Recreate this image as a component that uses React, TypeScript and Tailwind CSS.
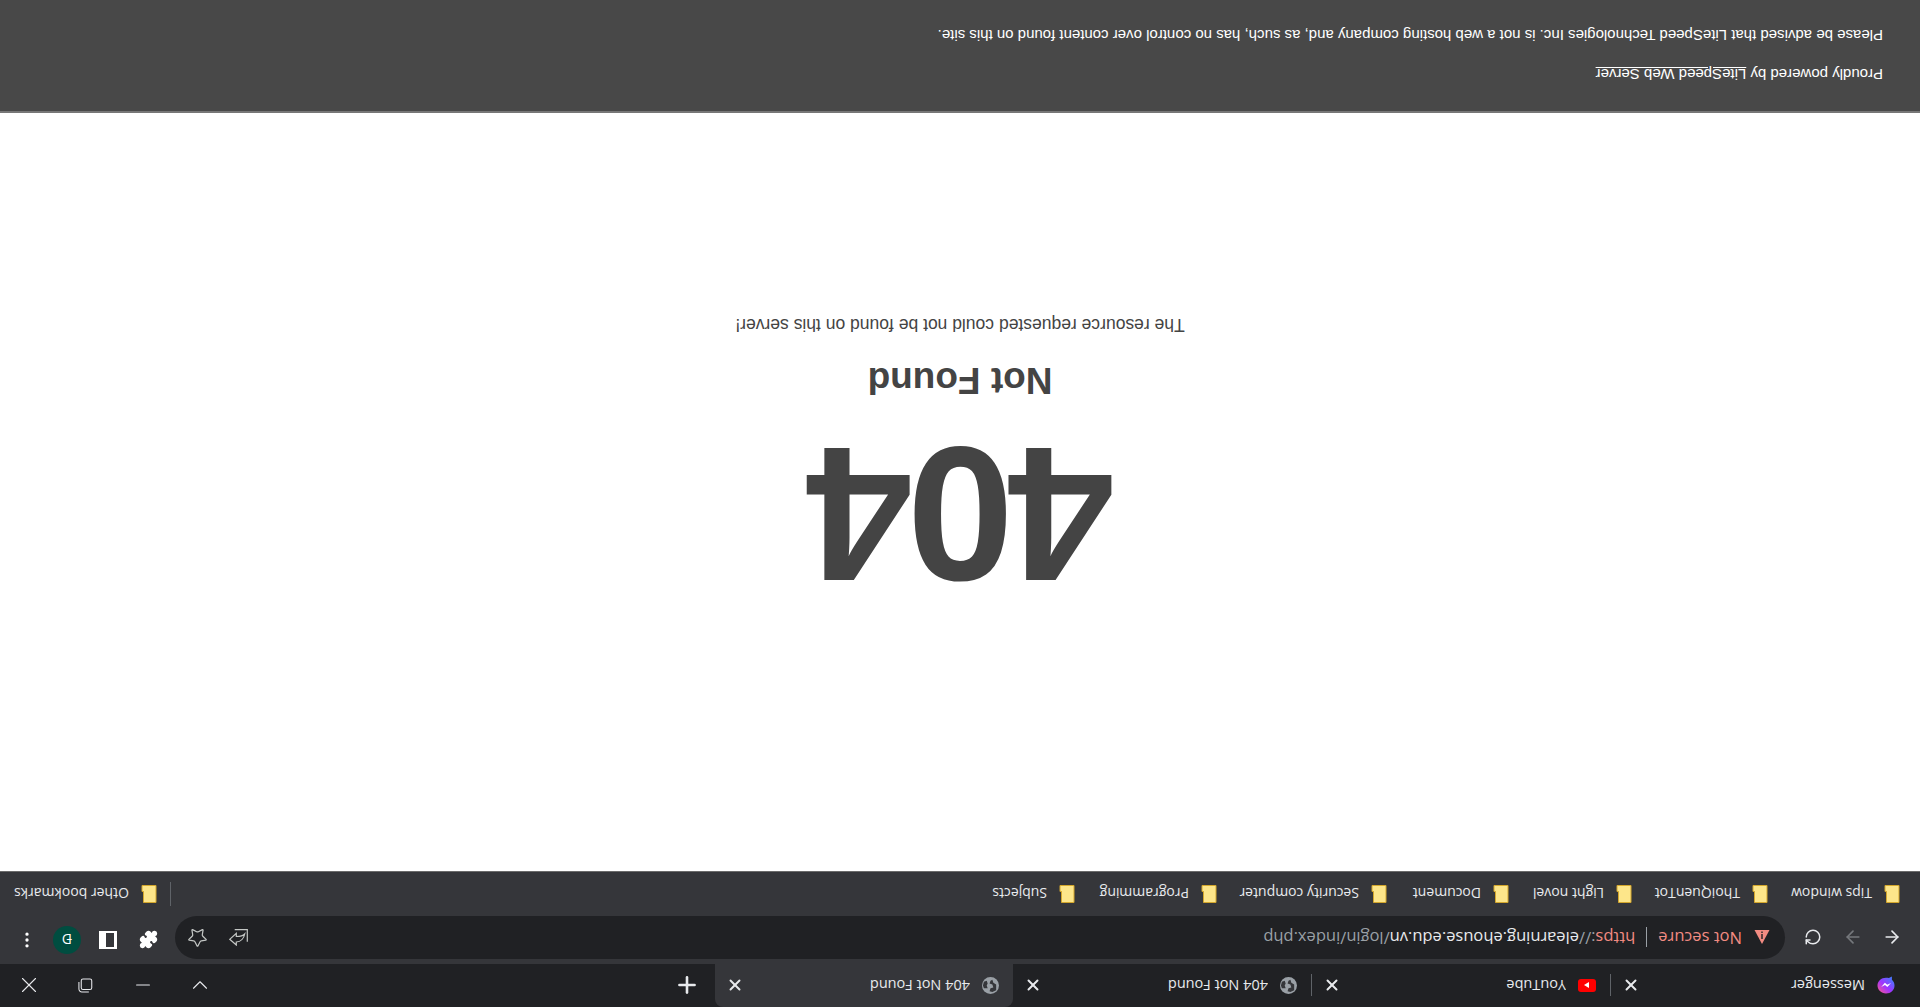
import { ArrowLeft, ArrowRight, RotateCw, Star, Puzzle, X, Plus, Minus, ChevronDown, EllipsisVertical } from 'lucide-react'

function Folder() {
  return (
    <svg width="16" height="18" viewBox="0 0 16 18" className="shrink-0">
      <path d="M1 0.500h12.500v11h1.500v6h-14z" fill="#fde68a" stroke="#d4a72c" strokeWidth="1" />
    </svg>
  )
}

function Globe() {
  return (
    <svg width="17" height="17" viewBox="0 0 18 18" className="shrink-0">
      <circle cx="9" cy="9" r="9" fill="#9aa0a6" />
      <path d="M3 4l4-2 3 1-1 3-3 1 1 3 3 1-1 3-2 1-1-3-3-2zM12 6l4 0 1 3-1 4-3 1-1-3 1-2z" fill="#35363a" />
    </svg>
  )
}

function Messenger() {
  return (
    <svg width="18" height="18" viewBox="0 0 18 18" className="shrink-0">
      <defs>
        <linearGradient id="msg" x1="0" y1="1" x2="1" y2="0">
          <stop offset="0" stopColor="#2f8cff" />
          <stop offset="0.55" stopColor="#a033ff" />
          <stop offset="1" stopColor="#ff5c87" />
        </linearGradient>
      </defs>
      <path d="M9 0.500c-4.800 0-8.500 3.500-8.500 8 0 2.400 1 4.400 2.600 5.800v3.200l3-1.600c.9.200 1.900.4 2.900.4 4.800 0 8.500-3.500 8.500-7.800s-3.700-8-8.500-8z" fill="url(#msg)" />
      <path d="M4 11l3.700-4 2.300 2 3.800-2-3.700 4.200-2.300-2z" fill="#fff" />
    </svg>
  )
}

function Tab({ title, icon, active }: { title: string; icon: React.ReactNode; active?: boolean }) {
  return (
    <div className={'relative flex h-[43px] w-[298px] shrink-0 items-center gap-[12px] pl-[14px] pr-[11px] ' + (active ? 'rounded-t-lg bg-[#35363a]' : '')}>
      {icon}
      <span className="flex-1 truncate text-[14.500px] text-[#e8eaed]">{title}</span>
      <X size={18} strokeWidth={2.6} className="shrink-0 text-[#e8eaed]" />
    </div>
  )
}

function Mark({ name, width }: { name: string; width: string }) {
  return (
    <div className={'flex items-center gap-[12px] ' + width}>
      <Folder />
      <span className="whitespace-nowrap text-[14px] text-[#e8eaed]">{name}</span>
    </div>
  )
}

export default function App() {
  return (
    <div className="flex h-[1007px] w-[1920px] rotate-180 flex-col overflow-hidden bg-white font-['Open_Sans','Liberation_Sans',sans-serif]">
      {/* tabs */}
      <div className="flex h-[43px] items-center bg-[#202124] pl-[11px]">
        <Tab title="Messenger" icon={<Messenger />} />
        <div className="h-[22px] w-px bg-[#5f6368]" />
        <Tab title="YouTube" icon={<div className="flex h-[13px] w-[18px] items-center justify-center rounded-[3px] bg-[#ff0000]"><div className="h-0 w-0 border-y-[3px] border-l-[5px] border-y-transparent border-l-white" /></div>} />
        <div className="h-[22px] w-px bg-[#5f6368]" />
        <Tab title="404 Not Found" icon={<Globe />} />
        <Tab title="404 Not Found" icon={<Globe />} active />
        <Plus size={26} strokeWidth={2.4} className="ml-[15px] text-[#e8eaed]" />
        <div className="ml-auto mr-[1px] flex items-center text-[#e8eaed]">
          <div className="flex w-[57px] justify-center"><ChevronDown size={26} strokeWidth={1} /></div>
          <div className="flex w-[57px] justify-center"><Minus size={22} strokeWidth={1.2} /></div>
          <div className="flex w-[57px] justify-center">
            <svg width="21" height="21" viewBox="0 0 18 18" fill="none" stroke="currentColor" strokeWidth="0.9"><rect x="4.500" y="5.500" width="9" height="9" rx="1.500" /><path d="M7 3.500h6a2.500 2.500 0 0 1 2.500 2.500v6" /></svg>
          </div>
          <div className="flex w-[57px] justify-center"><X size={26} strokeWidth={1} /></div>
        </div>
      </div>

      {/* toolbar */}
      <div className="flex h-[48px] bg-[#35363a] pt-[5px]">
        <div className="flex h-[43px] w-[135px] shrink-0 items-center pl-[18px] text-[#e8eaed]">
          <ArrowLeft size={20} />
          <ArrowRight size={20} className="ml-[19px] text-[#75787c]" />
          <RotateCw size={18} className="ml-[21px]" />
        </div>
        <div className="flex h-[43px] w-[1610px] items-center rounded-full bg-[#202124] pl-[15px] pr-[12px]">
          <svg width="16" height="16" viewBox="0 0 16 16" className="shrink-0"><path d="M8 1l7.500 14h-15z" fill="#f28b82" /><path d="M7.300 6h1.400v5h-1.400zM7.300 12h1.400v1.400h-1.400z" fill="#202124" /></svg>
          <span className="ml-[12px] text-[16.500px] text-[#f28b82]">Not secure</span>
          <div className="mx-[11px] h-[20px] w-px bg-[#9aa0a6]" />
          <span className="text-[16.500px] text-[#9aa0a6]"><span className="text-[#f28b82]">https</span>://<span className="text-[#e8eaed]">elearning.ehouse.edu.vn</span>/login/index.php</span>
          <div className="ml-auto flex items-center gap-[21px] text-[#c4c7c5]">
            <svg width="19" height="17" viewBox="0 0 19 17" fill="none" stroke="currentColor" strokeWidth="1.200"><path d="M0.700 4.300V16.400H13.300" /><path d="M11.700 1L18.300 6.700L11.700 12.700V9.500C8 9.500 5 10 3.300 12C4 8 7 4.200 11.700 4Z" /></svg>
            <Star size={21} strokeWidth={1.400} />
          </div>
        </div>
        <div className="flex flex-1 items-center pb-[5px] pl-[17px] text-white">
          <Puzzle size={19} fill="currentColor" />
          <div className="ml-[22px] flex h-[18px] w-[18px] justify-end border-2 border-l-[3px] border-white"><div className="w-[5px] bg-white" /></div>
          <div className="ml-[18px] flex h-[28px] w-[28px] items-center justify-center rounded-full bg-[#004d40] text-[14px] text-white">Đ</div>
          <EllipsisVertical size={20} className="ml-[16px]" />
        </div>
      </div>

      {/* bookmarks */}
      <div className="flex h-[44px] items-center bg-[#35363a] pl-[20px]">
        <Mark name="Tips window" width="w-[132px]" />
        <Mark name="ThoiQuenTot" width="w-[136px]" />
        <Mark name="Light novel" width="w-[123px]" />
        <Mark name="Document" width="w-[122px]" />
        <Mark name="Security computer" width="w-[170px]" />
        <Mark name="Programming" width="w-[142px]" />
        <Mark name="Subjects" width="w-[120px]" />
        <div className="ml-auto mr-[13px] h-[24px] w-px bg-[#5f6368]" />
        <Mark name="Other bookmarks" width="mr-[14px]" />
      </div>
      <div className="h-px bg-[#6b6b6b]" />

      {/* page */}
      <div className="flex flex-1 flex-col items-center pt-[289px] text-[#444444] font-['Liberation_Sans',Arial,sans-serif]">
        <h1 className="h-[136px] pr-[6px] text-[192px] leading-[136px] font-bold tracking-[-6px]">404</h1>
        <h2 className="mt-[52px] h-[28px] text-[37px] leading-[28px] font-bold">Not Found</h2>
        <p className="mt-[31px] h-[20px] text-[17.500px] leading-[20px]">The resource requested could not be found on this server!</p>
      </div>

      {/* footer */}
      <div className="flex h-[113px] flex-col gap-[19px] border-t-2 border-[#777777] bg-[#484848] pl-[37px] pt-[27px] text-[15px] leading-[20px] text-white font-['Liberation_Sans',Arial,sans-serif]">
        <p>Proudly powered by <span className="underline">LiteSpeed Web Server</span></p>
        <p>Please be advised that LiteSpeed Technologies Inc. is not a web hosting company and, as such, has no control over content found on this site.</p>
      </div>
    </div>
  )
}
